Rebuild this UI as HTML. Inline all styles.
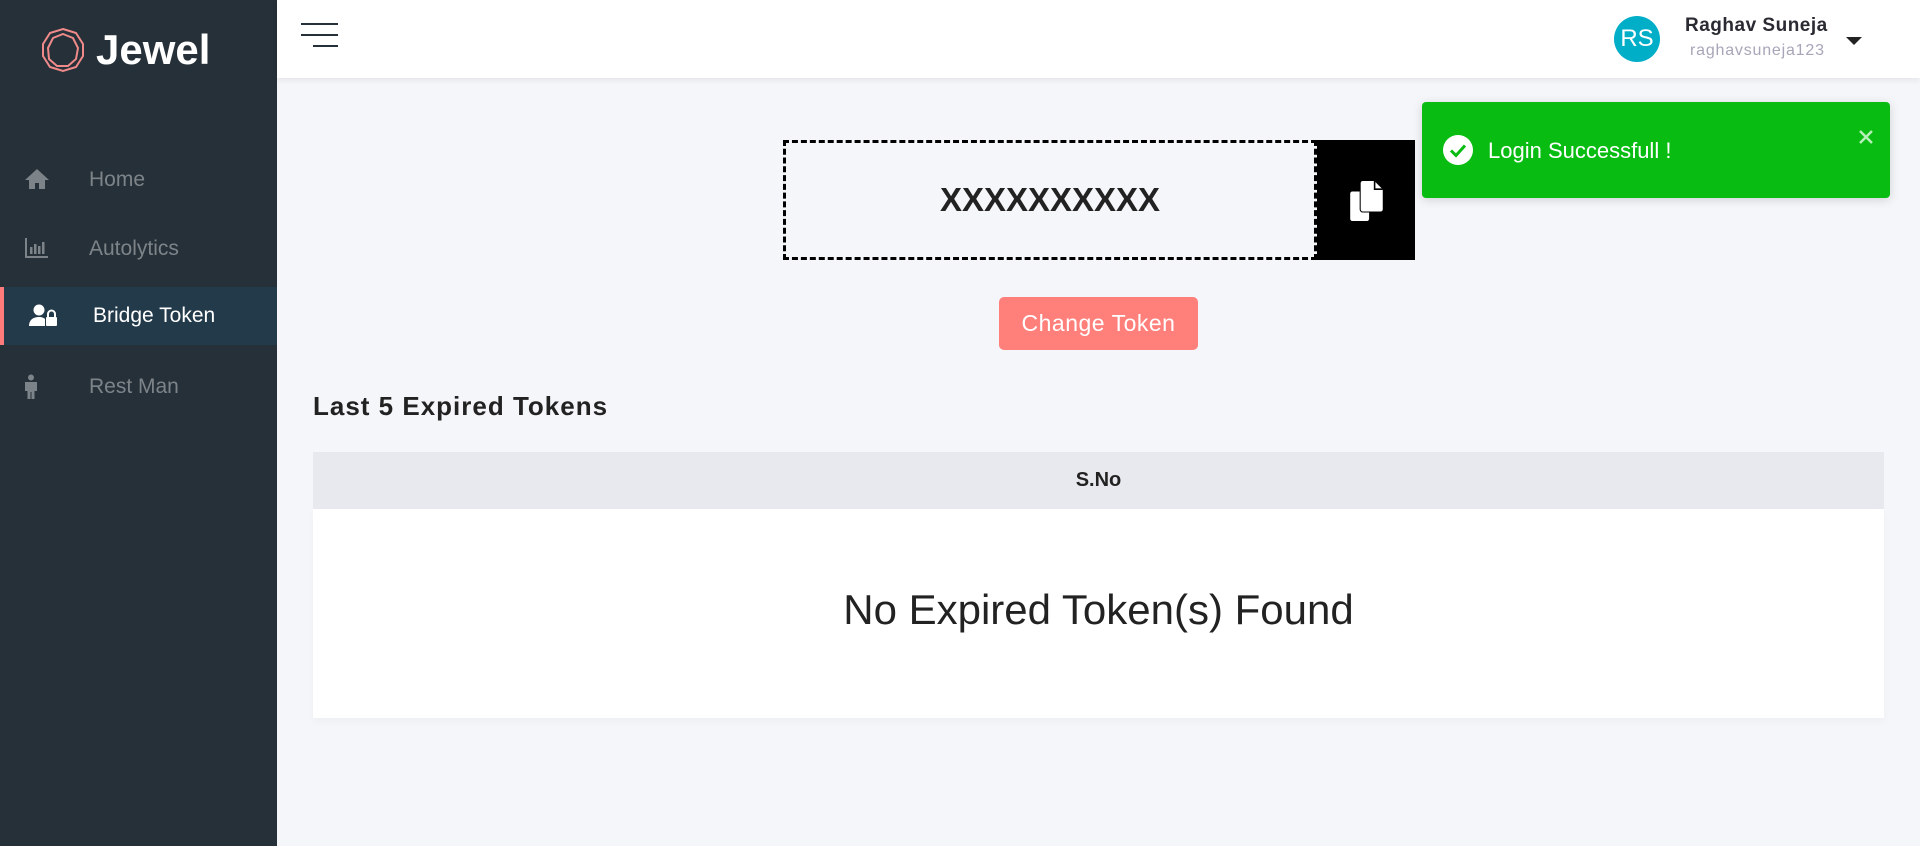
<!DOCTYPE html>
<html><head><meta charset="utf-8"><style>
*{margin:0;padding:0;box-sizing:border-box}
body{width:1920px;height:846px;overflow:hidden;background:#f5f6fa;font-family:"Liberation Sans",sans-serif;position:relative}
.sb{position:absolute;left:0;top:0;width:277px;height:846px;background:#263038}
.logo{position:absolute;left:40px;top:26px;display:flex;align-items:center}
.logo span{color:#fff;font-weight:bold;font-size:42px;margin-left:10px;letter-spacing:0px}
.mi{position:absolute;left:0;width:277px;height:58px;display:flex;align-items:center;color:#7d8489;font-size:21px}
.mi .ic{position:absolute;left:24px;top:17px}
.mi .t{position:absolute;left:89px}
.mi.act{background:#233a4a;color:#fff;border-left:4px solid #ff7b7b}
.hd{position:absolute;left:277px;top:0;right:0;height:78px;background:#fff;box-shadow:0 2px 6px rgba(0,0,0,.08)}
.ham div{position:absolute;height:2px;background:#263038}
.av{position:absolute;left:1614px;top:16px;width:46px;height:46px;border-radius:50%;background:#00aec8;color:#fff;font-size:24px;text-align:center;line-height:46px}
.nm{position:absolute;left:1685px;top:15px;font-weight:bold;font-size:19px;color:#2a2a33;letter-spacing:.5px}
.un{position:absolute;left:1690px;top:42px;font-size:16px;color:#a6a6b8;letter-spacing:.8px}
.car{position:absolute;left:1846px;top:37px;width:0;height:0;border-left:8px solid transparent;border-right:8px solid transparent;border-top:8px solid #222}
.toast{position:absolute;left:1422px;top:102px;width:468px;height:96px;background:#08bc12;border-radius:4px;box-shadow:0 2px 10px rgba(0,0,0,.15);color:#fff}
.tok{position:absolute;left:783px;top:140px;width:534px;height:120px;border:3px dashed #000;text-align:center;line-height:114px;font-weight:bold;font-size:33px;color:#222}
.cp{position:absolute;left:1317px;top:140px;width:98px;height:120px;background:#000}
.btn{position:absolute;left:999px;top:297px;width:199px;height:53px;background:#ff7f7b;border-radius:5px;color:#fff;font-size:23px;text-align:center;line-height:53px;letter-spacing:.5px}
.h2{position:absolute;left:313px;top:391px;font-size:26px;font-weight:bold;color:#222;letter-spacing:1px}
.th{position:absolute;left:313px;top:452px;width:1571px;height:57px;background:#e8e9ee;text-align:center;line-height:57px;font-weight:bold;font-size:20px;color:#222}
.tb{position:absolute;left:313px;top:509px;width:1571px;height:209px;background:#fff;text-align:center;line-height:202px;font-size:42px;color:#222;box-shadow:0 4px 8px rgba(0,0,0,.03)}
</style></head><body>
<div class="sb">
 <div class="logo">
  <svg width="46" height="46" viewBox="0 0 46 46" fill="none" stroke="#f08a8a" stroke-width="2"><polygon points="23,2 36,6 43,17 43,29 36,40 23,44 10,40 3,29 3,17 10,6"/><polygon points="23,7 33,11 38,21 36,32 28,39 17,39 9,32 8,21 13,11"/></svg>
  <span>Jewel</span>
 </div>
 <div class="mi" style="top:151px"><svg class="ic" width="26" height="22" viewBox="0 0 26 22"><path d="M13 1 L1 12 H5 V21 H11 V15 H15 V21 H21 V12 H25 Z" fill="#7d8489"/></svg><span class="t">Home</span></div>
 <div class="mi" style="top:220px"><svg class="ic" width="24" height="22" viewBox="0 0 24 22" fill="#7d8489"><path d="M1 1h2v18h21v2H1z"/><rect x="6" y="10" width="2.5" height="7"/><rect x="10" y="7" width="2.5" height="10"/><rect x="14" y="9" width="2.5" height="8"/><rect x="18" y="5" width="2.5" height="12"/></svg><span class="t">Autolytics</span></div>
 <div class="mi act" style="top:287px"><svg class="ic" style="left:25px" width="30" height="24" viewBox="0 0 30 24" fill="#fff"><circle cx="10" cy="6" r="5.5"/><path d="M0 22c0-6 4-9 10-9 3 0 5 1 6 2v7z"/><rect x="17" y="13" width="11" height="9" rx="1"/><path d="M19 13v-3a3.5 3.5 0 0 1 7 0v3" fill="none" stroke="#fff" stroke-width="2"/></svg><span class="t">Bridge Token</span></div>
 <div class="mi" style="top:358px"><svg class="ic" style="left:23px;top:16px" width="16" height="26" viewBox="0 0 16 26" fill="#7d8489"><circle cx="8" cy="3.5" r="3"/><path d="M2 8h12v9h-2.5v8h-3v-7h-1v7h-3v-8H2z"/></svg><span class="t">Rest Man</span></div>
</div>
<div class="hd">
 <div class="ham"><div style="left:24px;top:23px;width:37px"></div><div style="left:24px;top:34px;width:37px"></div><div style="left:36px;top:45px;width:25px"></div></div>
</div>
<div class="av">RS</div>
<div class="nm">Raghav Suneja</div>
<div class="un">raghavsuneja123</div>
<div class="car"></div>
<div class="tok">XXXXXXXXXX</div>
<div class="cp"><svg style="position:absolute;left:31px;top:40px" width="38" height="42" viewBox="0 0 32 40" fill="#fff"><path d="M12 1h11l8 8v19a2 2 0 0 1-2 2H12a2 2 0 0 1-2-2V3a2 2 0 0 1 2-2z"/><path d="M23 1v8h8" fill="#000" stroke="#000" stroke-width="1"/><path d="M24 2v6h6z"/><path d="M2 11h7v17a3 3 0 0 0 3 3h6v6a2 2 0 0 1-2 2H2a2 2 0 0 1-2-2V13a2 2 0 0 1 2-2z"/></svg></div>
<div class="btn">Change Token</div>
<div class="toast">
 <svg style="position:absolute;left:21px;top:33px" width="30" height="30" viewBox="0 0 30 30"><circle cx="15" cy="15" r="15" fill="#fff"/><path d="M8 15.5l5 5 9-10" fill="none" stroke="#08bc12" stroke-width="3"/></svg>
 <div style="position:absolute;left:66px;top:36px;font-size:22px">Login Successfull !</div>
 <svg style="position:absolute;left:437px;top:28px" width="14" height="14" viewBox="0 0 14 14"><path d="M1 1l12 12M13 1L1 13" stroke="#b6f0b8" stroke-width="2.5"/></svg>
</div>
<div class="h2">Last 5 Expired Tokens</div>
<div class="th">S.No</div>
<div class="tb">No Expired Token(s) Found</div>
</body></html>
